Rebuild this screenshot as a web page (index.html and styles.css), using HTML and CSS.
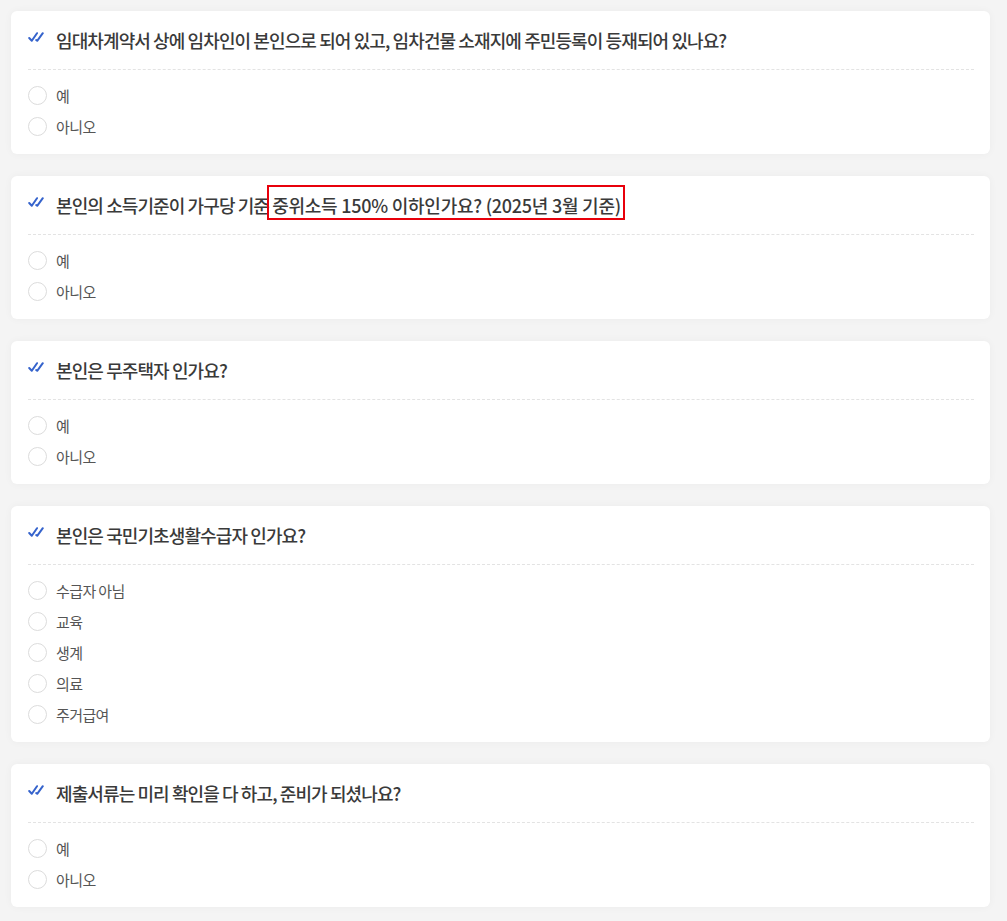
FILE: index.html
```html
<!DOCTYPE html>
<html>
<head>
    <title>자가진단</title>
    <link rel="stylesheet" href="styles.css">
</head>
<body>
    <div class="survey">
        <div class="question-card">
            <div class="question-title">
                <svg class="check-icon" viewBox="0 0 18 10" width="18" height="10"><path d="M1.2 6 L3.8 8.8 L9 1.2 M8.2 8 L9.2 8.8 L14.8 1.2" fill="none" stroke="#3563cc" stroke-width="2" stroke-linecap="round" stroke-linejoin="round"/></svg>
                <span>임대차계약서 상에 임차인이 본인으로 되어 있고, 임차건물 소재지에 주민등록이 등재되어 있나요?</span>
            </div>
            <div class="option-list">
                <label class="option"><span class="radio"></span>예</label>
                <label class="option"><span class="radio"></span>아니오</label>
            </div>
        </div>

        <div class="question-card">
            <div class="question-title">
                <svg class="check-icon" viewBox="0 0 18 10" width="18" height="10"><path d="M1.2 6 L3.8 8.8 L9 1.2 M8.2 8 L9.2 8.8 L14.8 1.2" fill="none" stroke="#3563cc" stroke-width="2" stroke-linecap="round" stroke-linejoin="round"/></svg>
                <span>본인의 소득기준이 가구당 기준 <span class="highlight">중위소득 150% 이하인가요? (2025년 3월 기준)</span></span>
            </div>
            <div class="option-list">
                <label class="option"><span class="radio"></span>예</label>
                <label class="option"><span class="radio"></span>아니오</label>
            </div>
        </div>

        <div class="question-card">
            <div class="question-title">
                <svg class="check-icon" viewBox="0 0 18 10" width="18" height="10"><path d="M1.2 6 L3.8 8.8 L9 1.2 M8.2 8 L9.2 8.8 L14.8 1.2" fill="none" stroke="#3563cc" stroke-width="2" stroke-linecap="round" stroke-linejoin="round"/></svg>
                <span>본인은 무주택자 인가요?</span>
            </div>
            <div class="option-list">
                <label class="option"><span class="radio"></span>예</label>
                <label class="option"><span class="radio"></span>아니오</label>
            </div>
        </div>

        <div class="question-card">
            <div class="question-title">
                <svg class="check-icon" viewBox="0 0 18 10" width="18" height="10"><path d="M1.2 6 L3.8 8.8 L9 1.2 M8.2 8 L9.2 8.8 L14.8 1.2" fill="none" stroke="#3563cc" stroke-width="2" stroke-linecap="round" stroke-linejoin="round"/></svg>
                <span>본인은 국민기초생활수급자 인가요?</span>
            </div>
            <div class="option-list">
                <label class="option"><span class="radio"></span>수급자 아님</label>
                <label class="option"><span class="radio"></span>교육</label>
                <label class="option"><span class="radio"></span>생계</label>
                <label class="option"><span class="radio"></span>의료</label>
                <label class="option"><span class="radio"></span>주거급여</label>
            </div>
        </div>

        <div class="question-card">
            <div class="question-title">
                <svg class="check-icon" viewBox="0 0 18 10" width="18" height="10"><path d="M1.2 6 L3.8 8.8 L9 1.2 M8.2 8 L9.2 8.8 L14.8 1.2" fill="none" stroke="#3563cc" stroke-width="2" stroke-linecap="round" stroke-linejoin="round"/></svg>
                <span>제출서류는 미리 확인을 다 하고, 준비가 되셨나요?</span>
            </div>
            <div class="option-list">
                <label class="option"><span class="radio"></span>예</label>
                <label class="option"><span class="radio"></span>아니오</label>
            </div>
        </div>
    </div>
</body>
</html>
```

FILE: styles.css
```css
body {
    margin: 0;
    background-color: #f4f4f4;
    font-family: "Noto Sans CJK KR", "Noto Sans", sans-serif;
}

.survey {
    display: flex;
    flex-direction: column;
    gap: 22px;
    padding: 11px 17px 20px 11px;
}

.question-card {
    background-color: #fff;
    border-radius: 6px;
    box-shadow: 0 0 8px rgba(0, 0, 0, 0.04);
    padding: 16px 16px 12px 17px;
}

.question-title {
    display: flex;
    align-items: center;
    gap: 10px;
    height: 26px;
    padding-bottom: 16px;
    border-bottom: 1px dashed #e3e3e3;
    font-size: 18px;
    font-weight: 500;
    color: #3a3a3a;
    letter-spacing: -0.9px;
}

.check-icon {
    flex-shrink: 0;
    margin-top: -6px;
}

.highlight {
    position: relative;
    letter-spacing: -0.25px;
}

.highlight::after {
    content: "";
    position: absolute;
    left: -5px;
    right: -4px;
    top: -7px;
    bottom: -2px;
    border: 2px solid #e8000b;
}

.option-list {
    display: flex;
    flex-direction: column;
    padding-top: 10px;
}

.option {
    display: flex;
    align-items: center;
    gap: 9px;
    height: 31px;
    font-size: 15px;
    color: #555;
    letter-spacing: -0.6px;
}

.radio {
    width: 17px;
    height: 17px;
    border: 1px solid #dcdcdc;
    border-radius: 50%;
    background-color: #fff;
}
```
